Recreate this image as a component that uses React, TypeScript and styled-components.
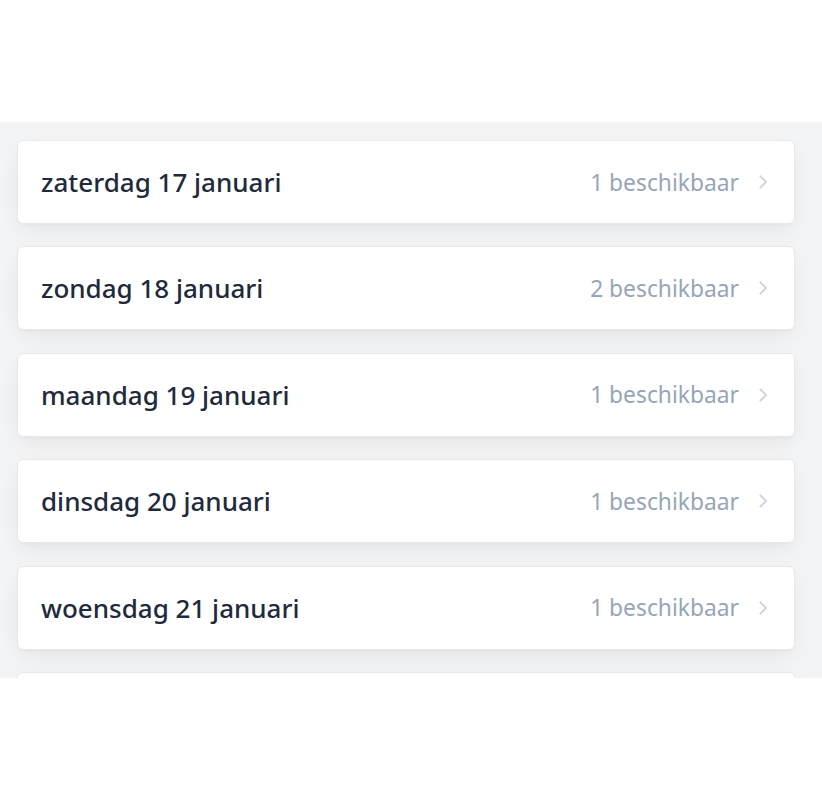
import styled, { createGlobalStyle } from 'styled-components'

const GlobalStyle = createGlobalStyle`
  html, body {
    margin: 0;
    padding: 0;
    background: #ffffff;
    font-family: 'Noto Sans', 'Open Sans', sans-serif;
  }
`

const days = [
  { label: 'zaterdag 17 januari', available: 1 },
  { label: 'zondag 18 januari', available: 2 },
  { label: 'maandag 19 januari', available: 1 },
  { label: 'dinsdag 20 januari', available: 1 },
  { label: 'woensdag 21 januari', available: 1 },
]

function ChevronRight() {
  return (
    <Chevron viewBox="0 0 12 16" fill="none" stroke="currentColor" strokeWidth={2.2} strokeLinecap="round" strokeLinejoin="round">
      <path d="M3.5 2.5l5.5 5.5-5.5 5.5" />
    </Chevron>
  )
}

export default function App() {
  return (
    <>
      <GlobalStyle />
      <Page>
        <Spacer />
        <DayList>
          {days.map(day => (
            <DayCard key={day.label}>
              <DayLabel>{day.label}</DayLabel>
              <Right>
                <Availability>{day.available} beschikbaar</Availability>
                <ChevronRight />
              </Right>
            </DayCard>
          ))}
          {/* next day, scrolled just into view */}
          <DayCard />
        </DayList>
      </Page>
    </>
  )
}

const Page = styled.div`
  width: 822px;
  height: 800px;
  display: flex;
  flex-direction: column;
  background: #ffffff;
`

const Spacer = styled.div`
  height: 122px;
  flex-shrink: 0;
`

const DayList = styled.div`
  height: 556px;
  overflow: hidden;
  background: #f3f4f6;
  padding: 18px 27px 0 17px;
  box-sizing: border-box;
  display: flex;
  flex-direction: column;
  gap: 22.4px;
`

const DayCard = styled.div`
  flex-shrink: 0;
  height: 84px;
  box-sizing: border-box;
  background: #ffffff;
  border: 1px solid #e6e8eb;
  border-radius: 6px;
  box-shadow: 0 8px 24px -4px rgba(17, 24, 39, 0.08), 0 2px 4px -2px rgba(17, 24, 39, 0.05);
  display: flex;
  align-items: center;
  justify-content: space-between;
  padding: 0 25px 0 23px;
`

const DayLabel = styled.span`
  font-size: 26px;
  font-weight: 500;
  color: #1f2a3c;
`

const Right = styled.div`
  display: flex;
  align-items: center;
  gap: 18px;
`

const Availability = styled.span`
  font-size: 22.8px;
  font-weight: 400;
  color: #97a5b8;
`

const Chevron = styled.svg`
  width: 12px;
  height: 16px;
  color: #d4d8de;
`
